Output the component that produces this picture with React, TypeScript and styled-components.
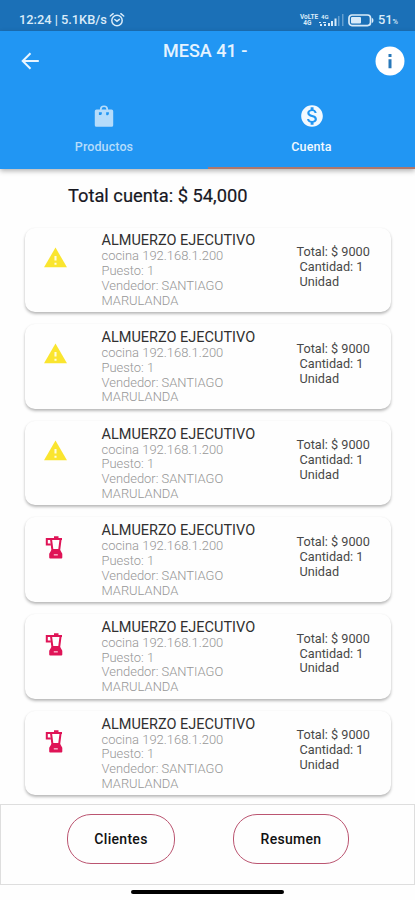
import React from 'react';
import styled, { createGlobalStyle } from 'styled-components';

const GlobalStyle = createGlobalStyle`
  * { box-sizing: border-box; }
  body { margin: 0; background: #fefefe; font-family: Roboto, "Liberation Sans", sans-serif; }
  svg { display: block; flex: none; }
`;

const Screen = styled.div`
  width: 415px;
  height: 900px;
  display: flex;
  flex-direction: column;
  overflow: hidden;
  background: #fefefe;
`;

const StatusBar = styled.div`
  height: 31px;
  flex: none;
  padding: 9px 17px 0 19px;
  display: flex;
  justify-content: space-between;
  background: #1b70b7;
  color: #d9ebf9;
`;

const StatusGroup = styled.div<{ $gap: number }>`
  height: 22px;
  display: flex;
  align-items: center;
  gap: ${(p) => p.$gap}px;
`;

const StatusText = styled.span`
  display: flex;
  align-items: baseline;
  font-size: 12.8px;
  font-weight: 500;
  line-height: 22px;
  white-space: nowrap;
`;

const Percent = styled.span`
  font-size: 7.5px;
  line-height: 8px;
`;

const NetworkLabel = styled.span`
  width: 15px;
  font-size: 6.5px;
  font-weight: 700;
  line-height: 6px;
  text-align: center;
`;

const Header = styled.header`
  height: 137.5px;
  flex: none;
  display: flex;
  flex-direction: column;
  background: #2196f3;
  color: #fff;
  box-shadow: 0 2px 5px rgba(0, 0, 0, 0.3);
`;

const TitleRow = styled.div`
  height: 60px;
  flex: none;
  display: grid;
  grid-template-columns: 60px 1fr 50px;
  align-items: center;
`;

const BackButton = styled.button`
  border: 0;
  padding: 0 0 0 20px;
  background: none;
  color: #e9f5ff;
`;

const InfoButton = styled.button`
  border: 0;
  padding: 0 0 0 10px;
  background: none;
  color: #fff;
`;

const Title = styled.h1`
  margin: 0;
  padding: 9px 0 0 103px;
  align-self: start;
  font-size: 18px;
  font-weight: 500;
  line-height: 22px;
  color: #e5f3ff;
  white-space: nowrap;
`;

const Tabs = styled.nav`
  flex: 1;
  display: grid;
  grid-template-columns: 208px 207px;
`;

const Tab = styled.div<{ $active?: boolean }>`
  display: flex;
  flex-direction: column;
  align-items: center;
  padding-top: 12px;
  gap: 9px;
  color: ${(p) => (p.$active ? '#f2f9ff' : '#b5dcfb')};
  border-bottom: 2px solid ${(p) => (p.$active ? '#b0776b' : 'transparent')};
`;

const TabLabel = styled.span`
  font-size: 12.5px;
  font-weight: 500;
  line-height: 18px;
  letter-spacing: 0.1px;
`;

const Total = styled.h2`
  margin: 0;
  padding: 15px 0 0 68px;
  height: 59px;
  flex: none;
  font-size: 18.3px;
  font-weight: 400;
  line-height: 24px;
  color: #17171f;
  -webkit-text-stroke: 0.2px #17171f;
  white-space: nowrap;
`;

const List = styled.main`
  flex: none;
  height: 576.5px;
  padding: 0 24px 0 25px;
  display: flex;
  flex-direction: column;
  gap: 12px;
`;

const Card = styled.article`
  height: 84.65px;
  flex: none;
  display: grid;
  grid-template-columns: 76.5px 195px 1fr;
  border-radius: 10px;
  background: #fefefe;
  box-shadow: 0 2px 3px rgba(0, 0, 0, 0.27), 0 0 2px rgba(0, 0, 0, 0.04);
`;

const CardIcon = styled.div`
  padding: 18px 0 0 17.5px;
`;

const Details = styled.div`
  padding-top: 5.8px;
  font-size: 12.95px;
  line-height: 14.8px;
  font-weight: 300;
  color: #969696;
  white-space: nowrap;
`;

const ProductName = styled.div`
  font-size: 14.5px;
  line-height: 16px;
  font-weight: 400;
  color: #303030;
`;

const Amounts = styled.div`
  padding-top: 17.6px;
  font-size: 12.7px;
  line-height: 14.9px;
  color: #484848;
  white-space: nowrap;
`;

const AmountLine = styled.div<{ $indent?: boolean }>`
  padding-left: ${(p) => (p.$indent ? 3 : 0)}px;
`;

const Footer = styled.footer`
  height: 81px;
  flex: none;
  display: flex;
  align-items: flex-start;
  gap: 58px;
  padding: 9px 0 0 66px;
  border: 1.5px solid #dedede;
  background: #fefefe;
`;

const PillButton = styled.button<{ $width: number }>`
  width: ${(p) => p.$width}px;
  height: 50px;
  padding: 0;
  border: 1px solid #bb5571;
  border-radius: 24px;
  background: #fefefe;
  color: #111;
  font-family: inherit;
  font-size: 14px;
  font-weight: 500;
  letter-spacing: 0.3px;
`;

const HomeArea = styled.div`
  flex: 1;
  display: flex;
  justify-content: center;
  padding-top: 5px;
`;

const HomeIndicator = styled.div`
  width: 153px;
  height: 4px;
  border-radius: 2px;
  background: #000;
`;

const AlarmIcon = () => (
  <svg width="16" height="16" viewBox="0 0 16 16" fill="none" stroke="currentColor" strokeWidth="1.5" strokeLinecap="round">
    <circle cx="8" cy="8.500" r="5.200" />
    <path d="M1.300 4 4.200 1.700M14.700 4 11.800 1.700M5.800 7.500 8 9.200 10.400 7.400" />
  </svg>
);

const SignalIcon = () => (
  <svg width="25" height="14" viewBox="0 0 25 14" fill="currentColor">
    <text x="2" y="5.5" fontSize="6" fontWeight="700">4G</text>
    <path d="M0 9h2v1H0zM1 11h2v2H1zM4 9h3v1H4zM5 11h2v2H5zM9 10h2v3H9zM12 8h2v5h-2zM15.500 5.500h2V13h-2z" />
    <path d="M19 3h1.500v10H19zM23 1h1.500v12H23z" opacity=".38" />
  </svg>
);

const BatteryIcon = () => (
  <svg width="26" height="13" viewBox="0 0 26 13" fill="none">
    <rect x="1" y="1" width="21.5" height="10.6" rx="3" stroke="currentColor" strokeWidth="1.7" />
    <rect x="3" y="3" width="10" height="6.6" rx="1" fill="currentColor" />
    <path d="M23.800 3.700c2.200.8 2.200 4.500 0 5.300z" fill="currentColor" />
  </svg>
);

const BackIcon = () => (
  <svg width="20" height="20" viewBox="0 0 20 20" fill="none" stroke="currentColor" strokeWidth="2">
    <path d="M18.800 10H3M10.500 2.200 2.700 10l7.800 7.800" />
  </svg>
);

const InfoIcon = () => (
  <svg width="30" height="30" viewBox="0 0 30 30">
    <circle cx="15" cy="15" r="14.5" fill="currentColor" />
    <path d="M13.500 8h3v3h-3zM13.500 13.200h3v9h-3z" fill="#2878b9" />
  </svg>
);

const BagIcon = () => (
  <svg width="26" height="26" viewBox="0 0 24 24" fill="currentColor">
    <path d="M19 6h-3.200a3.800 3.800 0 0 0-7.600 0H5a1.500 1.500 0 0 0-1.500 1.500v13A1.500 1.500 0 0 0 5 22h14a1.500 1.500 0 0 0 1.500-1.500v-13A1.500 1.500 0 0 0 19 6zm-7-2.200A2.200 2.200 0 0 1 14.200 6H9.800A2.200 2.200 0 0 1 12 3.800zM9 11H7.300V8.500H10V10a1 1 0 0 1-1 1zm6.700 0a1 1 0 0 1-1.700-1V8.500h2.500V10a1 1 0 0 1-.8 1z" />
  </svg>
);

const MoneyIcon = () => (
  <svg width="26" height="26" viewBox="0 0 24 24" fill="currentColor">
    <path d="M12 2C6.480 2 2 6.480 2 12s4.480 10 10 10 10-4.480 10-10S17.520 2 12 2zm1.410 16.090V20h-2.670v-1.930c-1.710-.36-3.160-1.460-3.270-3.400h1.960c.1 1.050.82 1.870 2.650 1.870 1.960 0 2.400-.98 2.400-1.590 0-.83-.44-1.610-2.670-2.140-2.480-.6-4.180-1.620-4.180-3.670 0-1.720 1.390-2.840 3.110-3.210V4h2.670v1.950c1.860.45 2.790 1.860 2.850 3.390H14.300c-.05-1.110-.64-1.870-2.220-1.870-1.500 0-2.400.68-2.400 1.640 0 .84.65 1.390 2.670 1.910s4.180 1.390 4.180 3.910c-.01 1.830-1.380 2.830-3.120 3.160z" />
  </svg>
);

const WarningIcon = () => (
  <svg width="25" height="25" viewBox="0 0 24 24">
    <path d="M1 20.500h22L12 1.500z" fill="#fae52f" />
    <path d="M11 16h2v2h-2zM11 9.500h2V14h-2z" fill="#fffce0" />
  </svg>
);

const BlenderIcon = () => (
  <svg width="25" height="25" viewBox="0 0 25 25" fill="none" stroke="#df1457" strokeWidth="2">
    <path d="M7.500 4H3.800v5.500h4" />
    <path d="M6.500 4H19M11 2.300h4.500" />
    <path d="M8 4l1.400 11h6.800L17.600 4" />
    <path d="M9.300 15.500h7l2 3.500v3.500H7.200V19z" fill="#df1457" strokeLinejoin="round" />
    <path d="M10.800 19.800h4" stroke="#f7a9c2" strokeWidth="1.500" />
  </svg>
);

type OrderStatus = 'warning' | 'preparing';

const orders: OrderStatus[] = ['warning', 'warning', 'warning', 'preparing', 'preparing', 'preparing'];

const OrderCard = ({ status }: { status: OrderStatus }) => (
  <Card>
    <CardIcon>{status === 'warning' ? <WarningIcon /> : <BlenderIcon />}</CardIcon>
    <Details>
      <ProductName>ALMUERZO EJECUTIVO</ProductName>
      <div>cocina 192.168.1.200</div>
      <div>Puesto: 1</div>
      <div>Vendedor: SANTIAGO</div>
      <div>MARULANDA</div>
    </Details>
    <Amounts>
      <AmountLine>Total: $ 9000</AmountLine>
      <AmountLine $indent>Cantidad: 1</AmountLine>
      <AmountLine $indent>Unidad</AmountLine>
    </Amounts>
  </Card>
);

export default function App() {
  return (
    <Screen>
      <GlobalStyle />
      <StatusBar>
        <StatusGroup $gap={2}>
          <StatusText>12:24 | 5.1KB/s</StatusText>
          <AlarmIcon />
        </StatusGroup>
        <StatusGroup $gap={4}>
          <NetworkLabel>VoLTE 4G</NetworkLabel>
          <SignalIcon />
          <BatteryIcon />
          <StatusText>51<Percent>%</Percent></StatusText>
        </StatusGroup>
      </StatusBar>
      <Header>
        <TitleRow>
          <BackButton aria-label="Volver"><BackIcon /></BackButton>
          <Title>MESA 41 -</Title>
          <InfoButton aria-label="Información"><InfoIcon /></InfoButton>
        </TitleRow>
        <Tabs>
          <Tab><BagIcon /><TabLabel>Productos</TabLabel></Tab>
          <Tab $active><MoneyIcon /><TabLabel>Cuenta</TabLabel></Tab>
        </Tabs>
      </Header>
      <Total>Total cuenta: $ 54,000</Total>
      <List>
        {orders.map((status, index) => <OrderCard key={index} status={status} />)}
      </List>
      <Footer>
        <PillButton $width={108}>Clientes</PillButton>
        <PillButton $width={116}>Resumen</PillButton>
      </Footer>
      <HomeArea><HomeIndicator /></HomeArea>
    </Screen>
  );
}
